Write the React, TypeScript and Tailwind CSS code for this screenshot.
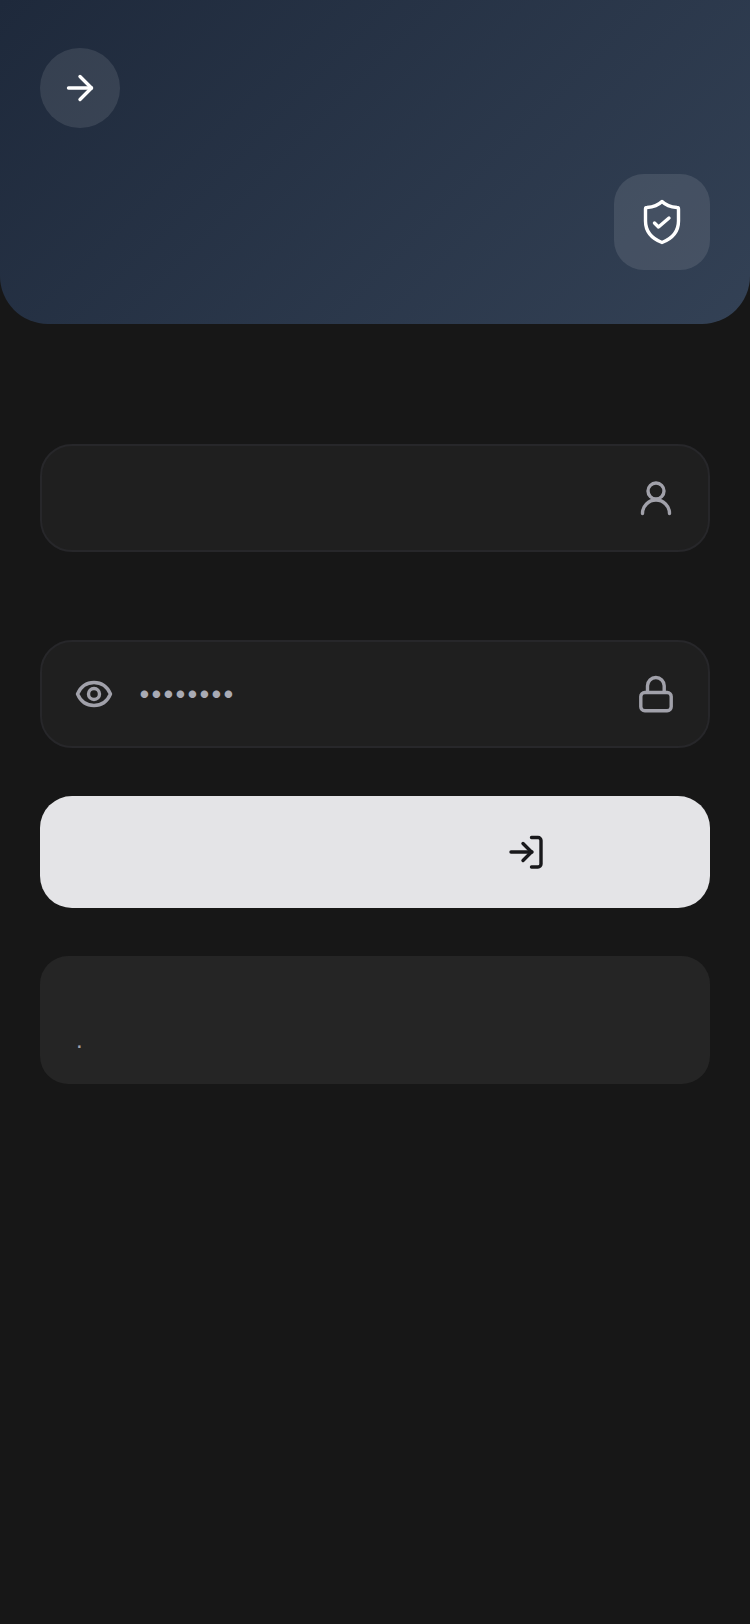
export default function App() {
  return (
    <div className="min-h-[1624px] bg-[#171717] font-['Inter',sans-serif]">
      {/* Header */}
      <div className="flex h-[324px] flex-col justify-between rounded-b-[48px] bg-[linear-gradient(135deg,#1e293b,#334155)] px-10 pb-[54px] pt-12">
        <button className="flex h-20 w-20 items-center justify-center self-start rounded-full bg-white/10">
          <svg width="48" height="48" viewBox="0 0 48 48" fill="none" stroke="#fff" strokeWidth="3.4" strokeLinecap="round" strokeLinejoin="round">
            <path d="M12.5 24H35.5" />
            <path d="M24 12.5L35.5 24L24 35.5" />
          </svg>
        </button>
        <div className="flex h-24 w-24 items-center justify-center self-end rounded-[30px] bg-white/10">
          <svg width="48" height="48" viewBox="0 0 48 48" fill="none" stroke="#fff" strokeWidth="3.4" strokeLinecap="round" strokeLinejoin="round">
            <path d="M24 3.5C27 6.5 33 9 39 9.5a1.5 1.5 0 0 1 1.5 1.5V23C40.5 34 33 41 24 44.5C15 41 7.5 34 7.5 23V11a1.5 1.5 0 0 1 1.5-1.5C15 9 21 6.5 24 3.5Z" />
            <path d="M16.5 25L20.5 29L31 20" />
          </svg>
        </div>
      </div>

      <div className="flex flex-col px-10 pt-[120px]">
        {/* Username */}
        <div className="flex h-[108px] items-center justify-end rounded-[32px] border-2 border-[#27272a] bg-[#1f1f1f] px-7">
          <svg width="48" height="48" viewBox="0 0 48 48" fill="none" stroke="#a1a1aa" strokeWidth="3.4" strokeLinecap="round">
            <circle cx="24" cy="17" r="8" />
            <path d="M10.5 39.5A13.5 13.5 0 0 1 37.5 39.5" />
          </svg>
        </div>

        {/* Password */}
        <div className="mt-[88px] flex h-[108px] items-center rounded-[32px] border-2 border-[#27272a] bg-[#1f1f1f] px-7">
          <svg width="48" height="48" viewBox="0 0 48 48" fill="none" stroke="#a1a1aa" strokeWidth="3.4">
            <path d="M7.5 24C11 16 17 12.5 24 12.5S37 16 40.5 24C37 32 31 35.5 24 35.5S11 32 7.5 24Z" strokeLinejoin="round" />
            <circle cx="24" cy="24" r="5.5" />
          </svg>
          <span className="ml-5 flex-1 pb-0.5 text-[24px] font-medium leading-none tracking-[-0.8px] text-[#a9abb5]">••••••••</span>
          <svg width="48" height="48" viewBox="0 0 48 48" fill="none" stroke="#a1a1aa" strokeWidth="3.4" strokeLinecap="round">
            <rect x="8.8" y="22.5" width="30.4" height="18.3" rx="4" />
            <path d="M15.5 22V15.85a8.35 8.35 0 0 1 16.7 0V22" />
          </svg>
        </div>

        {/* Sign in */}
        <button className="mt-12 flex h-28 items-center justify-end rounded-[32px] bg-[#e4e4e7] pr-40">
          <svg width="48" height="48" viewBox="0 0 48 48" fill="none" stroke="#18181b" strokeWidth="3.4" strokeLinecap="round" strokeLinejoin="round">
            <path d="M9 24H30" />
            <path d="M21 15.5L29.5 24L21 32.5" />
            <path d="M29.5 9.5H36a3 3 0 0 1 3 3V36a3 3 0 0 1-3 3H29.5" />
          </svg>
        </button>

        {/* Note */}
        <div className="mt-12 h-32 rounded-[28px] bg-[#252525] pl-9 pt-[70px] font-['Liberation_Sans',sans-serif] text-[24px] leading-7 text-[#a1a1aa]">
          .
        </div>
      </div>
    </div>
  );
}
